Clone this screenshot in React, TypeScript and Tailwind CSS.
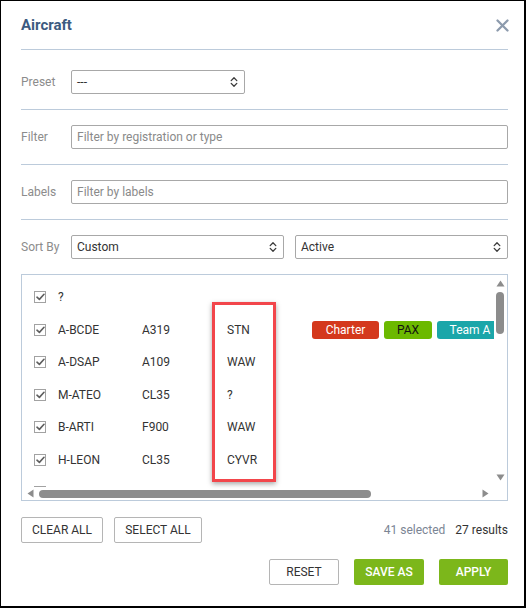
import React from "react";

type Row = { reg: string; type: string; base: string; tags?: { name: string; cls: string; w?: string }[] };

const rows: Row[] = [
  { reg: "?", type: "", base: "" },
  {
    reg: "A-BCDE",
    type: "A319",
    base: "STN",
    tags: [
      { name: "Charter", cls: "bg-[#d4381c] text-white", w: "w-[67px]" },
      { name: "PAX", cls: "bg-[#6cb900] text-[#111]", w: "w-[48px]" },
      { name: "Team A", cls: "bg-[#1ba6a9] text-white", w: "w-[66px]" },
    ],
  },
  { reg: "A-DSAP", type: "A109", base: "WAW" },
  { reg: "M-ATEO", type: "CL35", base: "?" },
  { reg: "B-ARTI", type: "F900", base: "WAW" },
  { reg: "H-LEON", type: "CL35", base: "CYVR" },
  { reg: "", type: "", base: "" },
];

function Chevrons() {
  return (
    <svg width="8" height="12" viewBox="0 0 8 12" fill="none" stroke="#3a3a3a" strokeWidth="1.3" strokeLinecap="round" strokeLinejoin="round">
      <path d="M1.2 4.6 L4 1.8 L6.8 4.6" />
      <path d="M1.2 7.4 L4 10.2 L6.8 7.4" />
    </svg>
  );
}

function Select({ value, className }: { value: string; className: string }) {
  return (
    <div className={`h-6 flex items-center justify-between border border-[#a8a8a8] rounded-[2px] pl-[5px] pr-[6px] text-[#333] ${className}`}>
      <span>{value}</span>
      <Chevrons />
    </div>
  );
}

function Input({ placeholder }: { placeholder: string }) {
  return (
    <div className="h-6 flex-1 flex items-center border border-[#a8a8a8] rounded-[2px] pl-[5px] text-[#8a8a8a]">
      {placeholder}
    </div>
  );
}

function Check() {
  return (
    <span className="w-3 h-3 border border-[#a2a2a2] bg-white flex items-center justify-center shrink-0">
      <svg width="9" height="8" viewBox="0 0 9 8" fill="none" stroke="#5e5e5e" strokeWidth="1.6" strokeLinecap="round" strokeLinejoin="round">
        <path d="M1 4.2 L3.4 6.4 L8 1.3" />
      </svg>
    </span>
  );
}

function Field({ label, children, top }: { label: string; children: React.ReactNode; top: string }) {
  return (
    <div className={`flex items-center ${top} pb-[15px] border-b border-[#bccbdb]`}>
      <span className="w-[50px] shrink-0 text-[#8c8c8c]">{label}</span>
      {children}
    </div>
  );
}

export default function App() {
  return (
    <div
      className="w-[526px] h-[608px] bg-white border-black border-l border-t border-r-[2px] border-b-[2px] pl-5 pr-4 text-[12px] text-[#333] flex flex-col"
      style={{ fontFamily: "Roboto, 'Liberation Sans', sans-serif" }}
    >
      {/* header */}
      <div className="h-[49px] flex items-center justify-between border-b border-[#bccbdb]">
        <h1 className="text-[15px] font-bold text-[#3c5a80] leading-5">Aircraft</h1>
        <svg width="13" height="13" viewBox="0 0 13 13" stroke="#8d9bad" strokeWidth="2.3" strokeLinecap="round" className="mr-[-1px]">
          <path d="M1.5 1.5 L11.5 11.5 M11.5 1.5 L1.5 11.5" />
        </svg>
      </div>

      <Field label="Preset" top="pt-5">
        <Select value="---" className="w-[174px]" />
      </Field>
      <Field label="Filter" top="pt-[15px]">
        <Input placeholder="Filter by registration or type" />
      </Field>
      <Field label="Labels" top="pt-[15px]">
        <Input placeholder="Filter by labels" />
      </Field>

      <div className="flex items-center pt-[15px]">
        <span className="w-[50px] shrink-0 text-[#8c8c8c]">Sort By</span>
        <Select value="Custom" className="w-[213px]" />
        <Select value="Active" className="flex-1 ml-[11px]" />
      </div>

      {/* aircraft list */}
      <div className="relative mt-[15px] h-[227px] border border-[#bccbdb] overflow-hidden">
        <div className="absolute left-0 top-0 w-[472px] h-[212px] overflow-hidden pt-[6px]">
          {rows.map((r, i) => (
            <div key={i} className="h-[32.5px] flex items-center pl-[12px] whitespace-nowrap">
              <Check />
              <span className="ml-3 w-[84px] shrink-0">{r.reg}</span>
              <span className="w-[85px] shrink-0">{r.type}</span>
              <span className="w-[85px] shrink-0">{r.base}</span>
              {r.tags && (
                <div className="flex gap-[5px]">
                  {r.tags.map((t) => (
                    <span key={t.name} className={`h-[18px] rounded-[3px] flex items-center justify-center shrink-0 ${t.w} ${t.cls}`}>
                      {t.name}
                    </span>
                  ))}
                </div>
              )}
            </div>
          ))}
        </div>

        {/* vertical scrollbar */}
        <div className="absolute right-0 top-0 w-[14px] h-[212px] flex flex-col items-center">
          <svg width="9" height="7" viewBox="0 0 9 7" className="mt-[5px]">
            <path d="M0.5 6.5 L4.5 0.5 L8.5 6.5 Z" fill="#8c8c8c" />
          </svg>
          <div className="mt-[5px] w-2 h-[42px] rounded-full bg-[#8c8c8c]" />
          <div className="flex-1" />
          <svg width="9" height="7" viewBox="0 0 9 7" className="mb-[6px]">
            <path d="M0.5 0.5 L8.5 0.5 L4.5 6.5 Z" fill="#8c8c8c" />
          </svg>
        </div>

        {/* horizontal scrollbar */}
        <div className="absolute left-0 bottom-0 w-[472px] h-[13px] bg-white flex items-center">
          <svg width="7" height="9" viewBox="0 0 7 9" className="ml-[5px]">
            <path d="M6.5 0.5 L6.5 8.5 L0.5 4.5 Z" fill="#8c8c8c" />
          </svg>
          <div className="ml-[5px] w-[332px] h-2 rounded-full bg-[#8c8c8c]" />
          <div className="flex-1" />
          <svg width="7" height="9" viewBox="0 0 7 9" className="mr-[5px]">
            <path d="M0.5 0.5 L6.5 4.5 L0.5 8.5 Z" fill="#8c8c8c" />
          </svg>
        </div>

        {/* highlighted base column */}
        <div className="absolute left-[190px] top-[27px] w-[64px] h-[180px] border-[3px] border-[#f2464b] shadow-[0_2px_5px_rgba(0,0,0,0.35)]" />
      </div>

      {/* selection controls */}
      <div className="mt-4 flex items-center">
        <button className="h-[26px] w-[82px] border border-[#b5b5b5] rounded-[2px] text-[#333]">CLEAR ALL</button>
        <button className="ml-[11px] h-[26px] w-[88px] border border-[#b5b5b5] rounded-[2px] text-[#333]">SELECT ALL</button>
        <div className="flex-1" />
        <span className="text-[#7b8594]">41 selected</span>
        <span className="ml-[10px] text-[#333]">27 results</span>
      </div>

      <div className="mt-4 flex items-center justify-end">
        <button className="h-[26px] w-[70px] border border-[#b5b5b5] rounded-[2px] text-[#333]">RESET</button>
        <button className="ml-[15px] h-[26px] w-[70px] rounded-[2px] bg-[#7cb71b] text-white font-medium">SAVE AS</button>
        <button className="ml-[15px] h-[26px] w-[69px] rounded-[2px] bg-[#7cb71b] text-white font-medium">APPLY</button>
      </div>
    </div>
  );
}
